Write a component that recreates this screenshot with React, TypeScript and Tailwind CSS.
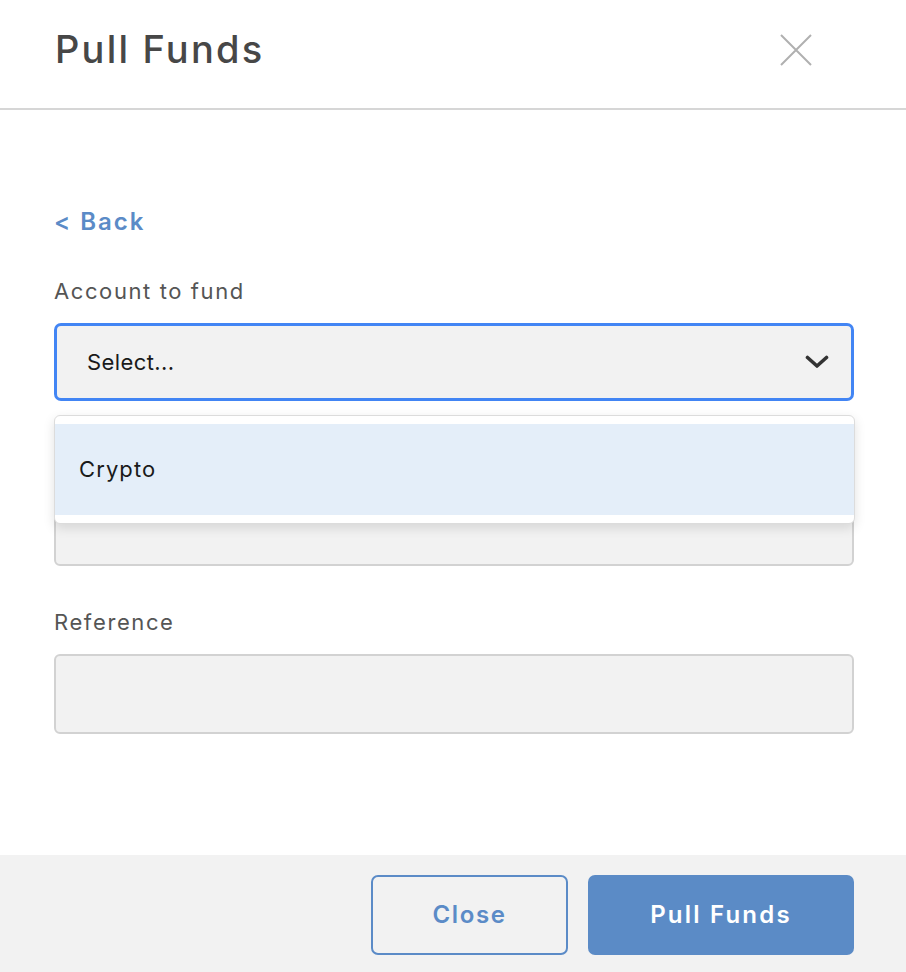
import React from "react";

export default function App() {
  return (
    <div
      className="w-[906px] h-[972px] bg-white flex flex-col overflow-hidden"
      style={{ fontFamily: "Inter, 'Open Sans', sans-serif" }}
    >
      <header className="h-[110px] shrink-0 border-b-2 border-[#d6d6d6] flex items-center justify-between pl-[55px] pr-[94px]">
        <h1 className="text-[38px] font-medium text-[#474747] tracking-[2.2px] -mt-[10px]">Pull Funds</h1>
        <svg width="32" height="32" viewBox="0 0 32 32" className="-mt-[8px]">
          <path d="M1 1 L31 31 M31 1 L1 31" stroke="#b0b0b0" strokeWidth="2" fill="none" />
        </svg>
      </header>

      <main className="flex-1 flex flex-col pl-[54px] pr-[52px] pt-[97px]">
        <a className="text-[24px] leading-[30px] font-semibold text-[#5b8bc7] tracking-[2px]">&lt; Back</a>

        <label className="mt-[40px] text-[22px] leading-[28px] text-[#555555] tracking-[1.6px]">Account to fund</label>
        <div className="relative mt-[18px]">
          <div className="h-[78px] w-full rounded-[7px] border-[3px] border-[#4285f4] bg-[#f2f2f2] flex items-center justify-between pl-[30px] pr-[22px]">
            <span className="text-[22px] text-[#1a1a1a] tracking-[0.4px]">Select...</span>
            <svg width="24" height="14" viewBox="0 0 24 14">
              <path d="M2.5 2.5 L12 11 L21.5 2.5" stroke="#333333" strokeWidth="3.6" fill="none" strokeLinecap="round" strokeLinejoin="round" />
            </svg>
          </div>
          <div className="absolute left-0 right-[-1px] top-[92px] z-10 bg-white rounded-[6px] border border-[#dcdcdc] shadow-[0_4px_12px_rgba(0,0,0,0.12)] py-[8px]">
            <div className="h-[91px] bg-[#e4eef9] flex items-center pl-[24px]">
              <span className="text-[22px] text-[#1a1a1a] tracking-[1.1px]">Crypto</span>
            </div>
          </div>
        </div>

        <div className="mt-[39px] h-[28px]" />
        <div className="mt-[18px] h-[80px] w-full rounded-[6px] border-2 border-[#d2d2d2] bg-[#f2f2f2]" />

        <label className="mt-[42px] text-[22px] leading-[28px] text-[#555555] tracking-[1.6px]">Reference</label>
        <div className="mt-[18px] h-[80px] w-full rounded-[6px] border-2 border-[#d2d2d2] bg-[#f2f2f2]" />
      </main>

      <footer className="h-[117px] shrink-0 bg-[#f2f2f2] flex items-start justify-end gap-[20px] pt-[20px] pr-[52px]">
        <button className="w-[197px] h-[80px] rounded-[7px] border-2 border-[#5b8bc7] text-[#5b8bc7] text-[24px] font-semibold tracking-[1.6px]">Close</button>
        <button className="w-[266px] h-[80px] rounded-[7px] bg-[#5b8bc6] text-white text-[24px] font-semibold tracking-[2.2px]">Pull Funds</button>
      </footer>
    </div>
  );
}
